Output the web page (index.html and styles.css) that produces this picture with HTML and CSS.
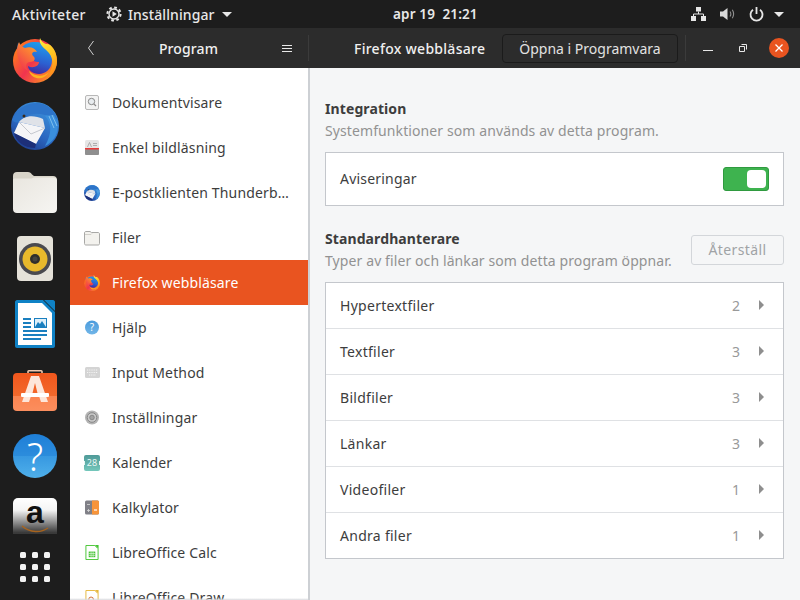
FILE: index.html
```html
<!DOCTYPE html>
<html lang="sv">
<head>
<meta charset="utf-8">
<title>Inställningar</title>
<link rel="stylesheet" href="styles.css">
</head>
<body>
<svg class="defs" width="0" height="0" aria-hidden="true">
  <defs>
    <linearGradient id="ffBase" x1="0" y1="0.3" x2="0.9" y2="0.9"><stop offset="0" stop-color="#ff7a1c"/><stop offset=".45" stop-color="#f0344f"/><stop offset="1" stop-color="#ff9a1e"/></linearGradient>
    <linearGradient id="ffBlue" x1="0.7" y1="0" x2="0.4" y2="1"><stop offset="0" stop-color="#1fa0ee"/><stop offset=".6" stop-color="#2c5fd0"/><stop offset="1" stop-color="#44249a"/></linearGradient>
    <linearGradient id="ffFlame" x1="0.2" y1="0" x2="0.6" y2="1"><stop offset="0" stop-color="#ffe93a"/><stop offset=".6" stop-color="#ffbd1f"/><stop offset="1" stop-color="#ff8a1a"/></linearGradient>
    <linearGradient id="ffHead" x1="0.7" y1="0" x2="0.1" y2="1"><stop offset="0" stop-color="#ffa02a"/><stop offset="1" stop-color="#f02f50"/></linearGradient>
    <linearGradient id="tbBlue" x1="0.8" y1="0" x2="0.2" y2="1"><stop offset="0" stop-color="#3f9ae0"/><stop offset=".6" stop-color="#2a66c0"/><stop offset="1" stop-color="#1d3a8a"/></linearGradient>
    <linearGradient id="swOrange" x1="0" y1="0" x2="0" y2="1"><stop offset="0" stop-color="#f0561c"/><stop offset=".6" stop-color="#f3692c"/><stop offset=".6" stop-color="#fb8450"/><stop offset="1" stop-color="#fb8e5e"/></linearGradient>
    <linearGradient id="helpBlue" x1="0" y1="0" x2="0" y2="1"><stop offset="0" stop-color="#1f80d8"/><stop offset="1" stop-color="#4fb0ea"/></linearGradient>
    <linearGradient id="helpSmall" x1="0" y1="0" x2="0" y2="1"><stop offset="0" stop-color="#4a9bdc"/><stop offset="1" stop-color="#72b6e8"/></linearGradient>
    <linearGradient id="azBag" x1="0" y1="0" x2="0" y2="1"><stop offset="0" stop-color="#ffffff"/><stop offset=".25" stop-color="#f4f4f4"/><stop offset=".72" stop-color="#3a3a3a"/><stop offset="1" stop-color="#2c2c2c"/></linearGradient>
    <linearGradient id="folder" x1="0" y1="0" x2="1" y2="1"><stop offset="0" stop-color="#e9e6df"/><stop offset="1" stop-color="#f6f5f2"/></linearGradient>
    <linearGradient id="calTeal" x1="0" y1="0" x2="0" y2="1"><stop offset="0" stop-color="#4f9a98"/><stop offset="1" stop-color="#74c7bb"/></linearGradient>
    <symbol id="i-firefox" viewBox="0 0 44 45">
      <circle cx="22" cy="23" r="22" fill="url(#ffBase)"/>
      <path d="M4 12 5 5 9 9C12 6 16 4 22 4 33 4 39 12 39 22 39 31 32 36 26 36 20 36 15 32 15 28 20 31 26 28 26 24 22 24 18 22 16 20 10 18 8 16 4 12Z" fill="url(#ffBlue)"/>
      <path d="M4 12C4 9 5 7 6 4 7 7 9 9 12 10 17 8 22 10 24 14 20 13 18 15 20 18 23 20 22 24 17 24 12 24 12 30 16 33 9 31 4 21 4 12Z" fill="url(#ffHead)"/>
      <path d="M27 0C25 7 32 10 36 15 41 21 41 32 33 39 40 36 44 30 44 23 44 13 38 5 33 6 30 5 28 3 27 0Z" fill="url(#ffFlame)"/>
      <path d="M16 33C22 39 31 39 36 34 31 43 19 42 16 33Z" fill="#ffb21f"/>
    </symbol>
    <symbol id="i-thunderbird" viewBox="0 0 48 48">
      <circle cx="24" cy="24" r="24" fill="url(#tbBlue)"/>
      <path d="M1 18C6 7 15 1 26 1 36 1 44 8 47 18 42 14 38 13 34 13 24 10 14 12 8 20 5 21 3 20 1 18Z" fill="#2d74c9"/>
      <path d="M8 20C12 14 22 12 32 17L34 26 8 20Z" fill="#dfe2e8"/>
      <path d="M8 20 34 26 25 42 3 31Z" fill="#f5f5f7"/>
      <path d="M8 20 20 32 34 26" fill="none" stroke="#c5c8cf" stroke-width="1"/>
      <path d="M3 31 25 42 24 46C14 46 5 40 3 31Z" fill="#1d2f78"/>
      <path d="M34 14C40 20 42 30 34 44 46 38 50 26 43 13Z" fill="#3a8fdc"/>
      <path d="M38 14 43 26M41 13 46 24" stroke="#7fc0ee" stroke-width="1"/>
      <circle cx="13" cy="14" r="1.500" fill="#3b2a1a"/>
    </symbol>
    <symbol id="i-folder" viewBox="0 0 44 41">
      <path d="M0 4C0 1.500 1.500 0 4 0H15C17 0 18 1 19 2.500L21 4H40C42.500 4 44 5.500 44 8V10H0Z" fill="#d8d4c9"/>
      <path d="M0 8C0 7 1 6.500 2 6.500H17C19 6.500 20 6 21 5.500H40C42.500 5.500 44 6.500 44 8.500V37C44 39.500 42.500 41 40 41H4C1.500 41 0 39.500 0 37Z" fill="url(#folder)"/>
    </symbol>
    <symbol id="i-folder-small" viewBox="0 0 16 16">
      <path d="M.5 3C.5 1.900 1.200 1.500 2 1.500H6L7.500 2.500H14C15 2.500 15.500 3 15.500 4V13.500C15.500 14.500 15 15 14 15H2C1 15 .5 14.500 .5 13.500Z" fill="#f3f2ee" stroke="#a8a8a6"/>
      <path d="M1 4.500H7L8 3.500" fill="none" stroke="#d2d0ca"/>
    </symbol>
    <symbol id="i-rhythmbox" viewBox="0 0 36 45">
      <rect width="36" height="45" rx="4" fill="#e5e2d9"/>
      <circle cx="18" cy="23" r="16" fill="#4a4a4f"/>
      <circle cx="18" cy="23" r="12.500" fill="#e8b92c"/>
      <circle cx="18" cy="23" r="5" fill="#2f2e2c"/>
      <circle cx="18" cy="23" r="2.500" fill="#45443f"/>
    </symbol>
    <symbol id="i-writer" viewBox="0 0 40 48">
      <path d="M2 0H28L40 12V46C40 47 39 48 38 48H2C1 48 0 47 0 46V2C0 1 1 0 2 0Z" fill="#0f82c6"/>
      <path d="M3 3H27L37 13V45H3Z" fill="#fff"/>
      <path d="M29 0H38C39 0 40 1 40 2V11Z" fill="#0f82c6"/>
      <path d="M8 18H16V20H8ZM8 22H16V24H8ZM8 26H16V28H8ZM8 30H32V32H8ZM8 34H32V36H8ZM8 38H26V40H8Z" fill="#1a7fbf"/>
      <path d="M19 18H32V28H19Z" fill="#1a7fbf"/>
      <path d="M20 19H31V27H20Z" fill="#dff0fa"/>
      <path d="M20 27 23 22 25 24 27 21 31 27Z" fill="#1a7fbf"/>
    </symbol>
    <symbol id="i-software" viewBox="0 0 44 41">
      <path d="M15 5V1.500C15 .7 15.700 .8 16.500 .8H27.500C28.300 .8 29 .7 29 1.500V5" fill="none" stroke="#f0c9b0" stroke-width="1.600"/>
      <rect y="3" width="44" height="38" rx="4" fill="url(#swOrange)"/>
      <path d="M18 6H26L35 32H28L26 26H18L16 32H9ZM19.500 23H24.500L22 13Z" fill="#fde6da" fill-rule="evenodd"/>
      <rect x="8" y="23" width="28" height="4" rx="1" fill="#fff"/>
    </symbol>
    <symbol id="i-help" viewBox="0 0 44 44">
      <circle cx="22" cy="22" r="22" fill="url(#helpBlue)"/>
      <path d="M0 22A22 22 0 0 1 44 22Z" fill="#1f7ed6" opacity=".45"/>
    </symbol>
    <symbol id="i-help-small" viewBox="0 0 14 14">
      <circle cx="7" cy="7" r="7" fill="url(#helpSmall)"/>
    </symbol>
    <symbol id="i-amazon" viewBox="0 0 44 48">
      <rect width="44" height="48" rx="5" fill="url(#azBag)"/>
      <path d="M9 28C17 35 28 35 35 30" fill="none" stroke="#a8641e" stroke-width="1.500"/>
    </symbol>
    <symbol id="i-doc" viewBox="0 0 14 15">
      <rect x=".5" y=".5" width="13" height="14" rx="1.500" fill="#f3f3f3" stroke="#b8b8b8"/>
      <circle cx="6.500" cy="6.500" r="3.200" fill="#e8ecef" stroke="#8a8a8a"/>
      <path d="M8.800 8.800 11 11" stroke="#8a8a8a" stroke-width="1.200"/>
    </symbol>
    <symbol id="i-scan" viewBox="0 0 14 15">
      <rect width="14" height="15" rx="1.500" fill="#e6e6e6"/>
      <rect y="9" width="14" height="6" rx="1" fill="#8f8f8f"/>
      <rect y="8" width="14" height="1.500" fill="#e63a3a"/>
      <path d="M2.500 7 4.500 2.500 6.500 7M8 3.500H12M8 5.500H12" fill="none" stroke="#a0a0a0" stroke-width=".8"/>
    </symbol>
    <symbol id="i-keyboard" viewBox="0 0 15 11">
      <rect width="15" height="11" rx="1.500" fill="#d4d4d4"/>
      <path d="M2 3H13M2 5.500H13M4 8H11" stroke="#f4f4f4" stroke-dasharray="1 .8"/>
    </symbol>
    <symbol id="i-gear" viewBox="0 0 14 14">
      <circle cx="7" cy="7" r="7" fill="#b4b4b4"/>
      <circle cx="7" cy="7" r="4.800" fill="#c9c9c9" stroke="#868686"/>
      <circle cx="7" cy="7" r="2.300" fill="#a2a2a2" stroke="#7e7e7e" stroke-width=".8"/>
    </symbol>
    <symbol id="i-calendar" viewBox="0 0 16 16">
      <rect width="16" height="16" rx="2" fill="url(#calTeal)"/>
      <path d="M.5 6V10M15.500 6V10" stroke="#e8f6f4"/>
    </symbol>
    <symbol id="i-calc" viewBox="0 0 14 14">
      <rect width="14" height="14" rx="1.500" fill="#808087"/>
      <path d="M7 0H12.500C13.300 0 14 .7 14 1.500V12.500C14 13.300 13.300 14 12.500 14H7Z" fill="#f7943a"/>
      <path d="M2 4H5M2 10H5M3.500 8.500V11.500" stroke="#d8d8d8" stroke-width=".8"/>
      <path d="M9 9.500H12" stroke="#fff" stroke-width="1.200"/>
    </symbol>
    <symbol id="i-localc" viewBox="0 0 14 16">
      <path d="M.5.500H10L13.500 4V15.500H.5Z" fill="#fff" stroke="#43c330"/>
      <path d="M10 0 14 4V0Z" fill="#43c330"/>
      <path d="M3.500 7H10.500V13H3.500Z" fill="#43c330"/>
      <path d="M3.500 9H10.500M3.500 11H10.500M6 7V13M8.200 7V13" stroke="#fff" stroke-width=".6"/>
    </symbol>
    <symbol id="i-lodraw" viewBox="0 0 14 16">
      <path d="M.5.500H10L13.500 4V15.500H.5Z" fill="#fff" stroke="#e5b63a"/>
      <path d="M10 0 14 4V0Z" fill="#e5b63a"/>
      <circle cx="6" cy="10" r="2.500" fill="none" stroke="#d2682c"/>
    </symbol>
  </defs>
</svg>

<header class="topbar">
  <div class="topbar-left">
    <span class="top-label">Aktiviteter</span>
    <span class="app-menu">
      <svg class="app-gear" viewBox="0 0 16 16"><circle cx="8" cy="8" r="6.600" fill="none" stroke="#e6e6e6" stroke-width="2" stroke-dasharray="2.700 2.480"/><circle cx="8" cy="8" r="5" fill="none" stroke="#e6e6e6" stroke-width="1.400"/><path d="M6.500 5.300V10.700L10.800 8Z" fill="#e6e6e6"/></svg>
      <span class="top-label app-name">Inställningar</span>
      <span class="caret"></span>
    </span>
  </div>
  <div class="clock">apr 19&nbsp; 21:21</div>
  <div class="tray">
    <svg class="tray-net" viewBox="0 0 15 14"><path d="M5 0H10V4.500H5ZM0 9H5V14H0ZM10 9H15V14H10Z" fill="#e6e6e6"/><path d="M7.500 4.500V7M2.500 9V7H12.500V9" fill="none" stroke="#e6e6e6"/></svg>
    <svg class="tray-vol" viewBox="0 0 15 14"><path d="M0 4.500H3L7.500 1V13L3 9.500H0Z" fill="#d8d8d8"/><path d="M10 4.500C11 6 11 8 10 9.500M12.300 2.800C14 5.500 14 8.500 12.300 11.200" fill="none" stroke="#8f8f8f" stroke-width="1.100"/></svg>
    <svg class="tray-pow" viewBox="0 0 15 15"><path d="M4 2.700A6 6 0 1 0 11 2.700M7.500 0V7" fill="none" stroke="#e6e6e6" stroke-width="1.800"/></svg>
    <span class="caret"></span>
  </div>
</header>

<div class="desk">
  <nav class="dock">
    <div class="dock-apps">
      <div class="dock-slot"><svg class="d-firefox"><use href="#i-firefox"/></svg></div>
      <div class="dock-slot"><svg class="d-thunderbird"><use href="#i-thunderbird"/></svg></div>
      <div class="dock-slot"><svg class="d-folder"><use href="#i-folder"/></svg></div>
      <div class="dock-slot"><svg class="d-rhythmbox"><use href="#i-rhythmbox"/></svg></div>
      <div class="dock-slot"><svg class="d-writer"><use href="#i-writer"/></svg></div>
      <div class="dock-slot"><svg class="d-software"><use href="#i-software"/></svg></div>
      <div class="dock-slot help-slot"><svg class="d-help"><use href="#i-help"/></svg><span class="help-mark">?</span></div>
      <div class="dock-slot amazon-slot"><svg class="d-amazon"><use href="#i-amazon"/></svg><span class="amazon-mark">a</span></div>
    </div>
    <div class="show-apps">
      <i></i><i></i><i></i><i></i><i></i><i></i><i></i><i></i><i></i>
    </div>
  </nav>

  <div class="window">
    <div class="headerbar">
      <div class="head-left">
        <svg class="back" viewBox="0 0 8 16"><path d="M6.500 1 1.500 8 6.500 15" fill="none" stroke="#d0d0d0" stroke-width="1"/></svg>
        <span class="head-title head-program">Program</span>
        <span class="burger"><i></i><i></i><i></i></span>
      </div>
      <div class="head-right">
        <span class="head-title head-firefox">Firefox webbläsare</span>
        <button class="open-btn">Öppna i Programvara</button>
        <div class="wm">
          <span class="wm-min"></span>
          <svg class="wm-max" viewBox="0 0 8 8"><path d="M2.500 .5H7.500V5.500M.5 2.500H5.500V7.500H.5Z" fill="none" stroke="#e8e8e8"/></svg>
          <span class="wm-close"><svg viewBox="0 0 10 10"><path d="M1.500 1.500 8.500 8.500M8.500 1.500 1.500 8.500" stroke="#fff" stroke-width="1.300"/></svg></span>
        </div>
      </div>
    </div>

    <div class="content">
      <aside class="sidebar">
        <ul class="app-list">
          <li class="app-row"><span class="app-ico"><svg class="s14"><use href="#i-doc"/></svg></span>Dokumentvisare</li>
          <li class="app-row"><span class="app-ico"><svg class="s14"><use href="#i-scan"/></svg></span>Enkel bildläsning</li>
          <li class="app-row"><span class="app-ico"><svg class="s16"><use href="#i-thunderbird"/></svg></span>E-postklienten Thunderb…</li>
          <li class="app-row"><span class="app-ico"><svg class="s16"><use href="#i-folder-small"/></svg></span>Filer</li>
          <li class="app-row selected"><span class="app-ico"><svg class="s16"><use href="#i-firefox"/></svg></span>Firefox webbläsare</li>
          <li class="app-row"><span class="app-ico help-small"><svg class="s14"><use href="#i-help-small"/></svg><b>?</b></span>Hjälp</li>
          <li class="app-row"><span class="app-ico"><svg class="s15"><use href="#i-keyboard"/></svg></span>Input Method</li>
          <li class="app-row"><span class="app-ico"><svg class="s14"><use href="#i-gear"/></svg></span>Inställningar</li>
          <li class="app-row"><span class="app-ico cal-small"><svg class="s16"><use href="#i-calendar"/></svg><b>28</b></span>Kalender</li>
          <li class="app-row"><span class="app-ico"><svg class="s14"><use href="#i-calc"/></svg></span>Kalkylator</li>
          <li class="app-row"><span class="app-ico"><svg class="s14"><use href="#i-localc"/></svg></span>LibreOffice Calc</li>
          <li class="app-row"><span class="app-ico"><svg class="s14"><use href="#i-lodraw"/></svg></span>LibreOffice Draw</li>
        </ul>
      </aside>

      <main class="main">
        <section class="group group-integration">
          <h2 class="group-title">Integration</h2>
          <p class="group-sub">Systemfunktioner som används av detta program.</p>
          <div class="box notif-row">
            <span>Aviseringar</span>
            <span class="switch"><i></i></span>
          </div>
        </section>
        <section class="group group-handlers">
          <div class="group-head">
            <div>
              <h2 class="group-title">Standardhanterare</h2>
              <p class="group-sub">Typer av filer och länkar som detta program öppnar.</p>
            </div>
            <button class="reset-btn">Återställ</button>
          </div>
          <ul class="box handler-list">
            <li class="handler"><span class="h-name">Hypertextfiler</span><span class="h-count">2</span><span class="h-arrow"></span></li>
            <li class="handler"><span class="h-name">Textfiler</span><span class="h-count">3</span><span class="h-arrow"></span></li>
            <li class="handler"><span class="h-name">Bildfiler</span><span class="h-count">3</span><span class="h-arrow"></span></li>
            <li class="handler"><span class="h-name">Länkar</span><span class="h-count">3</span><span class="h-arrow"></span></li>
            <li class="handler"><span class="h-name">Videofiler</span><span class="h-count">1</span><span class="h-arrow"></span></li>
            <li class="handler"><span class="h-name">Andra filer</span><span class="h-count">1</span><span class="h-arrow"></span></li>
          </ul>
        </section>
      </main>
    </div>
  </div>
</div>
</body>
</html>
```

FILE: styles.css
```css
* { box-sizing: border-box; }
html, body { margin: 0; padding: 0; width: 800px; height: 600px; overflow: hidden; }
body { font-family: "Noto Sans", "Open Sans", sans-serif; font-size: 14px; color: #3d3d3d; background: #1d1d1d; }
ul { list-style: none; margin: 0; padding: 0; }
h2, p { margin: 0; }
button { font: inherit; }
svg { display: block; }
.defs { position: absolute; }

/* top bar */
.topbar { height: 28px; background: #1d1d1d; color: #e8e8e8; display: grid; grid-template-columns: 381px auto 1fr; align-items: center; padding: 0 16px 0 12px; }
.topbar-left { display: flex; align-items: center; gap: 20px; }
.top-label { font-size: 14px; letter-spacing: .35px; font-weight: 500; white-space: nowrap; }
.app-name { letter-spacing: .1px; }
.app-menu { display: flex; align-items: center; gap: 6px; }
.app-gear { width: 16px; height: 16px; }
.caret { width: 0; height: 0; border-left: 5px solid transparent; border-right: 5px solid transparent; border-top: 5px solid #e8e8e8; }
.app-menu .caret { margin-left: 1px; }
.clock { font-weight: 600; font-size: 13.5px; letter-spacing: .15px; }
.tray { display: flex; align-items: center; justify-content: flex-end; gap: 14px; }
.tray-net { width: 15px; height: 14px; }
.tray-vol { width: 15px; height: 14px; }
.tray-pow { width: 15px; height: 15px; }
.tray .caret { margin-left: -4px; }

/* dock */
.desk { display: flex; height: 572px; }
.dock { width: 70px; flex: none; background: #1d1d1d; display: flex; flex-direction: column; }
.dock-apps { height: 506px; overflow: hidden; display: flex; flex-direction: column; gap: 2px; }
.dock-slot { height: 64px; flex: none; display: flex; align-items: center; justify-content: center; position: relative; }
.d-firefox { width: 44px; height: 45px; }
.d-thunderbird { width: 48px; height: 48px; }
.d-folder { width: 44px; height: 41px; }
.d-rhythmbox { width: 36px; height: 45px; }
.d-writer { width: 40px; height: 48px; }
.d-software { width: 44px; height: 41px; }
.d-help { width: 44px; height: 44px; }
.d-amazon { width: 44px; height: 48px; }
.help-mark { position: absolute; inset: 0; display: flex; align-items: center; justify-content: center; color: #fff; font-size: 38px; font-weight: 300; line-height: 1; }
.amazon-mark { position: absolute; left: 0; right: 0; top: 6px; text-align: center; font: bold 32px/1 "Liberation Sans", sans-serif; color: #111; }
.show-apps { margin: 18px 0 0 20px; display: grid; grid-template-columns: repeat(3, 6px); grid-auto-rows: 6px; gap: 6px; }
.show-apps i { background: #f2f2f2; border-radius: 1.500px; }

/* window */
.window { flex: 1; min-width: 0; display: flex; flex-direction: column; }
.headerbar { height: 40px; flex: none; background: #2c2c2c; color: #f0f0f0; display: flex; align-items: center; }
.head-left { width: 239px; flex: none; display: flex; align-items: center; padding: 0 16px 0 17px; border-right: 1px solid #3b3b3b; height: 26px; }
.back { width: 8px; height: 16px; }
.head-title { font-weight: 500; font-size: 14px; }
.head-program { flex: 1; text-align: center; letter-spacing: .1px; }
.burger { width: 10px; display: flex; flex-direction: column; gap: 2px; }
.burger i { height: 1px; background: #e8e8e8; }
.head-right { flex: 1; display: flex; align-items: center; padding-left: 45px; height: 100%; }
.head-firefox { width: 148px; flex: none; white-space: nowrap; letter-spacing: .27px; }
.open-btn { width: 176px; flex: none; height: 29px; padding: 0; background: #2c2c2c; color: #e2e2e2; border: 1px solid #1b1b1b; border-radius: 4px; font-size: 14px; }
.wm { margin-left: 7px; flex: 1; height: 26px; border-left: 1px solid #3b3b3b; display: flex; align-items: center; padding-left: 17px; }
.wm-min { width: 10px; height: 1px; background: #e8e8e8; margin-top: 4px; }
.wm-max { width: 8px; height: 8px; margin-left: 26px; }
.wm-close { width: 20px; height: 20px; border-radius: 50%; background: #e95420; margin-left: 22px; display: flex; align-items: center; justify-content: center; }
.wm-close svg { width: 10px; height: 10px; }

/* sidebar */
.content { flex: 1; min-height: 0; display: flex; background: #f5f6f7; }
.sidebar { width: 240px; flex: none; background: #fff; border-right: 2px solid #cdd0d4; overflow: hidden; padding-top: 12px; position: relative; }
.sidebar::after { content: ""; position: absolute; left: 0; right: 0; bottom: 0; height: 2px; background: linear-gradient(to bottom, rgba(200, 203, 208, 0), #d8dade); }
.app-row { height: 45px; display: flex; align-items: center; font-size: 14px; letter-spacing: .15px; white-space: nowrap; color: #3d3d3d; }
.app-row.selected { background: #e95420; color: #fff; }
.app-ico { width: 42px; flex: none; padding-left: 2px; position: relative; display: flex; justify-content: center; }
.s14 { width: 14px; height: 15px; }
.s15 { width: 15px; height: 11px; }
.s16 { width: 16px; height: 16px; }
.help-small b { position: absolute; left: 2px; right: 0; top: 0; text-align: center; color: #fff; font-size: 10px; line-height: 15px; font-weight: 400; }
.cal-small b { position: absolute; left: 2px; right: 0; top: 0; text-align: center; color: #e8f6f4; font-size: 9px; line-height: 16px; font-weight: 400; letter-spacing: 0; }

/* main */
.main { flex: 1; min-width: 0; padding: 31px 16px 0 15px; }
.group-title { font-size: 14px; font-weight: 700; color: #3d3d3d; line-height: 20px; letter-spacing: .1px; }
.group-sub { font-size: 14px; color: #929292; line-height: 20px; margin-top: 2px; letter-spacing: .1px; }
.box { background: #fff; border: 1px solid #c4c7cc; }
.notif-row { margin-top: 11px; height: 54px; display: flex; align-items: center; justify-content: space-between; padding: 0 14px 2px; letter-spacing: .2px; }
.switch { width: 46px; height: 24px; margin-top: 2px; background: #3eb34f; border: 1px solid #2f9a3f; border-radius: 3px; padding: 2px; display: flex; justify-content: flex-end; }
.switch i { width: 19px; height: 18px; background: #fff; border-radius: 4px; }
.group-handlers { margin-top: 23px; }
.group-head { display: flex; justify-content: space-between; align-items: flex-start; height: 43px; }
.reset-btn { margin-top: 6px; width: 93px; height: 30px; padding: 0 0 2px; background: #f5f6f7; border: 1px solid #d3d6da; border-radius: 3px; color: #a0a3a6; font-size: 14px; letter-spacing: .4px; }
.handler-list { margin-top: 10px; }
.handler { height: 46px; display: flex; align-items: center; padding: 0 18px 0 14px; border-top: 1px solid #dfe1e4; }
.handler:first-child { border-top: 0; height: 45px; }
.h-name { flex: 1; letter-spacing: .28px; }
.h-count { color: #999; margin-right: 19px; }
.h-arrow { width: 0; height: 0; margin-right: 1px; border-left: 5px solid #8e8e8e; border-top: 5px solid transparent; border-bottom: 5px solid transparent; margin-top: -2px; }
```
